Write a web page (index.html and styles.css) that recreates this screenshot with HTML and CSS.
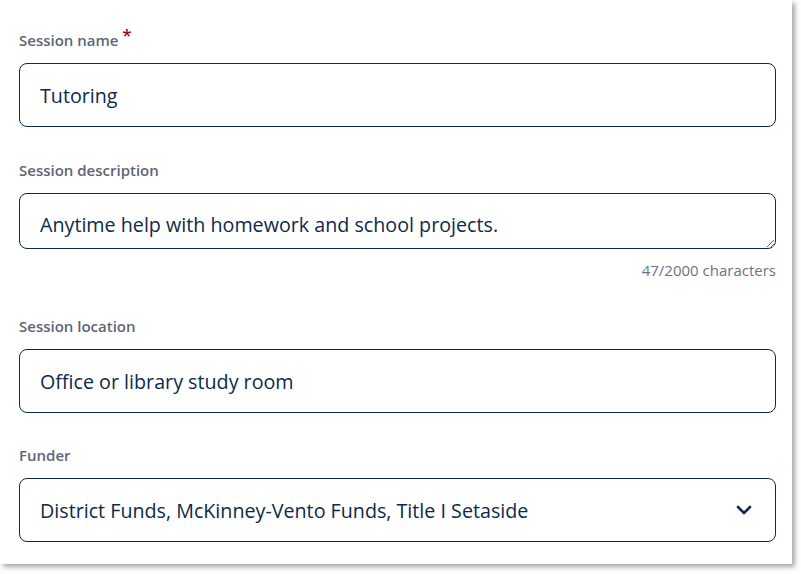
FILE: index.html
```html
<!DOCTYPE html>
<html lang="en">
<head>
    <meta charset="UTF-8">
    <meta name="viewport" content="width=device-width, initial-scale=1.0">
    <title>Edit Session</title>
    <link rel="stylesheet" href="styles.css">
</head>
<body>
    <form class="session-card">
        <!-- Session name -->
        <div class="field">
            <label class="field-label" for="sessionName">Session name <span class="required">*</span></label>
            <input class="field-input" type="text" id="sessionName" value="Tutoring">
        </div>

        <!-- Session description -->
        <div class="field">
            <label class="field-label" for="sessionDesc">Session description</label>
            <textarea class="field-input field-textarea" id="sessionDesc" rows="1">Anytime help with homework and school projects.</textarea>
            <p class="char-count">47/2000 characters</p>
        </div>

        <!-- Session location -->
        <div class="field field-location">
            <label class="field-label" for="sessionLocation">Session location</label>
            <input class="field-input" type="text" id="sessionLocation" value="Office or library study room">
        </div>

        <!-- Funder -->
        <div class="field field-funder">
            <label class="field-label" for="funder">Funder</label>
            <div class="select-box" id="funder">
                <span class="select-value">District Funds, McKinney-Vento Funds, Title I Setaside</span>
                <svg class="chevron" width="18" height="12" viewBox="0 0 18 12">
                    <path d="M3 3 L9 9 L15 3" fill="none" stroke="#0c2a4b" stroke-width="2.6" stroke-linecap="round" stroke-linejoin="round"/>
                </svg>
            </div>
        </div>
    </form>
</body>
</html>
```

FILE: styles.css
```css
/* Reset CSS */
* {
    margin: 0;
    padding: 0;
    box-sizing: border-box;
}

html, body {
    height: 574px;
}

body {
    background-color: #fff;
    font-family: "Open Sans", Arial, sans-serif;
    overflow: hidden;
}

/* Card */
.session-card {
    width: 792px;
    height: 564px;
    background-color: #fff;
    box-shadow: 3px 3px 5px rgba(0, 0, 0, 0.35);
    padding: 30px 16px 0 19px;
    display: flex;
    flex-direction: column;
    gap: 33px;
}

.field {
    display: flex;
    flex-direction: column;
}

.field-location {
    margin-top: 3px;
}

.field-funder {
    margin-top: -1px;
}

.field-label {
    display: block;
    height: 20px;
    margin-bottom: 13px;
    font-size: 15px;
    line-height: 20px;
    font-weight: 600;
    color: #5d6675;
}

.required {
    color: #a3001b;
    font-size: 17px;
    line-height: 10px;
    position: relative;
    top: -5px;
}

.field-input {
    width: 100%;
    height: 64px;
    border: 1px solid #0c2a4b;
    border-radius: 8px;
    padding: 0 20px;
    font-family: "Open Sans", Arial, sans-serif;
    font-size: 19.7px;
    color: #0c2a4b;
    background-color: #fff;
    outline: none;
}

.field-textarea {
    height: 56px;
    padding-top: 18px;
    line-height: 26px;
    resize: vertical;
    overflow: hidden;
}

.char-count {
    height: 20px;
    margin-top: 11px;
    text-align: right;
    font-size: 15px;
    line-height: 20px;
    color: #6b7380;
}

/* Select */
.select-box {
    height: 64px;
    border: 1px solid #0c2a4b;
    border-radius: 8px;
    padding: 0 22px 0 20px;
    display: flex;
    align-items: center;
    justify-content: space-between;
    font-size: 19.7px;
    color: #0c2a4b;
}
```
